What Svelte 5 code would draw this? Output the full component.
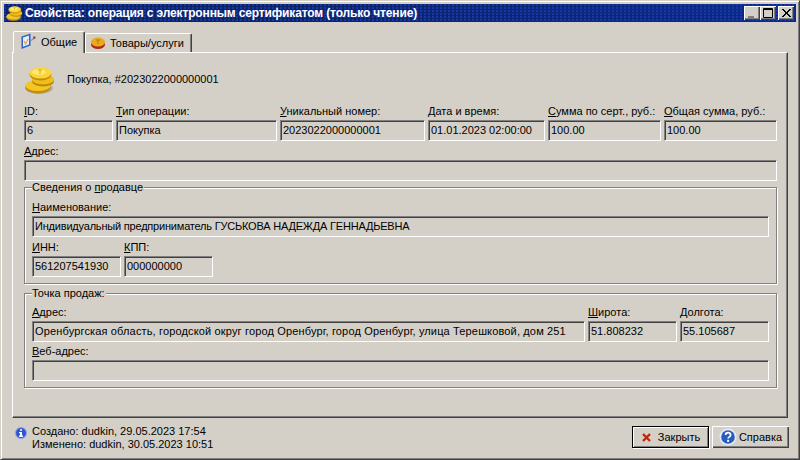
<script>
  const row1 = [
    { u: 'I', rest: 'D:', value: '6', w: 89 },
    { u: 'Т', rest: 'ип операции:', value: 'Покупка', w: 161 },
    { u: 'У', rest: 'никальный номер:', value: '2023022000000001', w: 145 },
    { u: 'Д', rest: 'ата и время:', value: '01.01.2023 02:00:00', w: 117 },
    { u: 'С', rest: 'умма по серт., руб.:', value: '100.00', w: 113 },
    { u: 'О', rest: 'бщая сумма, руб.:', value: '100.00', w: 113 }
  ];
</script>

{#snippet coins(w, h)}
  <svg class="ico" width={w} height={h} viewBox="0 0 30 27">
    <ellipse cx="14" cy="21" rx="14" ry="6" fill="#8f8a78" opacity="0.45" />
    <ellipse cx="13" cy="20.5" rx="12.5" ry="6" fill="#c08e0c" />
    <ellipse cx="13" cy="18.5" rx="12.5" ry="5.5" fill="#f3c525" />
    <ellipse cx="18" cy="14.5" rx="11" ry="5" fill="#b98808" />
    <ellipse cx="18" cy="12.5" rx="11" ry="5" fill="#f0bd1c" />
    <ellipse cx="15.5" cy="7.5" rx="11" ry="6" fill="#c08e0c" />
    <ellipse cx="15.5" cy="6" rx="11" ry="5.5" fill="#fbd632" />
    <ellipse cx="14" cy="5" rx="7" ry="3" fill="#ffe679" />
    <path d="M13 3h4M15 3v4" stroke="#d9a514" stroke-width="1" fill="none" />
  </svg>
{/snippet}

<div class="win">
  <div class="title">
    {@render coins(17, 15)}
    <span class="title-text">Свойства: операция с электронным сертификатом (только чтение)</span>
    <div class="ctrls">
      <div class="cb"><svg width="16" height="14" viewBox="0 0 16 14"><rect x="4" y="10" width="6" height="2" fill="#808080" /></svg></div>
      <div class="cb"><svg width="16" height="14" viewBox="0 0 16 14"><path d="M3.5 2.5h9v9h-9z M3 3.5h10" fill="none" stroke="#000" /></svg></div>
      <div class="cb gap"><svg width="16" height="14" viewBox="0 0 16 14"><path d="M4 3l8 8M5 3l8 8M12 3l-8 8M13 3l-8 8" stroke="#000" stroke-width="1" /></svg></div>
    </div>
  </div>

  <div class="tabs">
    <div class="tab active">
      <svg class="ico" width="17" height="17" viewBox="0 0 17 17">
        <path d="M1.5 3.5l9-3v12l-9 3.5z" fill="#2f62c8" />
        <path d="M3 4.6l6-2v9l-6 2.2z" fill="#e6eefc" />
        <path d="M4 8l1.6 3 2.6-5" fill="none" stroke="#d8a63c" stroke-width="1.2" />
        <path d="M10 8l5-3" stroke="#6f8fd8" stroke-width="1.2" />
        <rect x="13" y="3.5" width="2.5" height="2" fill="#b23a30" />
      </svg>
      <span>Общие</span>
    </div>
    <div class="tab">
      <svg class="ico" width="16" height="14" viewBox="0 0 16 14">
        <ellipse cx="8" cy="8.5" rx="7" ry="4.5" fill="#b12a14" />
        <ellipse cx="8" cy="6" rx="7" ry="4.5" fill="#e8ab1c" />
        <path d="M6 4h4M8 4v4" stroke="#b07a10" />
      </svg>
      <span>Товары/услуги</span>
    </div>
  </div>

  <div class="panel">
    <div class="head">
      {@render coins(30, 27)}
      <span class="head-text">Покупка, #2023022000000001</span>
    </div>

    <div class="row r1">
      {#each row1 as f}
        <div class="field" style="width:{f.w}px">
          <div class="lbl"><u>{f.u}</u>{f.rest}</div>
          <div class="inp">{f.value}</div>
        </div>
      {/each}
    </div>

    <div class="field addr">
      <div class="lbl"><u>А</u>дрес:</div>
      <div class="inp"></div>
    </div>

    <div class="group g1">
      <div class="legend">Сведения о <u>п</u>родавце</div>
      <div class="field">
        <div class="lbl"><u>Н</u>аименование:</div>
        <div class="inp tight">Индивидуальный предприниматель ГУСЬКОВА НАДЕЖДА ГЕННАДЬЕВНА</div>
      </div>
      <div class="row r2">
        <div class="field w89">
          <div class="lbl"><u>И</u>НН:</div>
          <div class="inp">561207541930</div>
        </div>
        <div class="field w89">
          <div class="lbl"><u>К</u>ПП:</div>
          <div class="inp">000000000</div>
        </div>
      </div>
    </div>

    <div class="group g2">
      <div class="legend">Точка продаж:</div>
      <div class="row r3">
        <div class="field grow">
          <div class="lbl"><u>А</u>дрес:</div>
          <div class="inp wide">Оренбургская область, городской округ город Оренбург, город Оренбург, улица Терешковой, дом 251</div>
        </div>
        <div class="field w89">
          <div class="lbl"><u>Ш</u>ирота:</div>
          <div class="inp">51.808232</div>
        </div>
        <div class="field w89">
          <div class="lbl"><u>Д</u>олгота:</div>
          <div class="inp">55.105687</div>
        </div>
      </div>
      <div class="field web">
        <div class="lbl"><u>В</u>еб-адрес:</div>
        <div class="inp"></div>
      </div>
    </div>
  </div>

  <div class="foot">
    <svg class="ico info" width="12" height="12" viewBox="0 0 12 12">
      <circle cx="6" cy="6" r="5.5" fill="#2f55d4" stroke="#8fa6ea" stroke-width="1" />
      <rect x="5" y="2.2" width="2" height="1.6" fill="#fff" />
      <path d="M4 5h3v3.5h1V10H4V8.5h1V6.2H4z" fill="#fff" />
    </svg>
    <div class="stamps">
      <div>Создано: dudkin, 29.05.2023 17:54</div>
      <div>Изменено: dudkin, 30.05.2023 10:51</div>
    </div>
    <div class="btns">
      <div class="btn def">
        <svg class="ico" width="11" height="11" viewBox="0 0 11 11"><path d="M2 2l7 7M9 2l-7 7" stroke="#b52a12" stroke-width="2.4" /></svg>
        <span>Закрыть</span>
      </div>
      <div class="btn">
        <svg class="ico" width="18" height="18" viewBox="0 0 18 18">
          <circle cx="9" cy="9" r="8.5" fill="#e4eaf6" />
          <circle cx="9" cy="9" r="6.8" fill="#2a5cc0" />
          <path d="M6.6 7c0-3.2 5-3.2 5 0 0 2-2.5 1.8-2.5 3.6" fill="none" stroke="#fff" stroke-width="1.7" />
          <rect x="8.1" y="11.8" width="2" height="2" fill="#fff" />
        </svg>
        <span>Справка</span>
      </div>
    </div>
  </div>
</div>

<style>
  :global(body) { margin: 0; background: #d4d0c8; }
  .win {
    box-sizing: border-box;
    width: 800px;
    height: 460px;
    padding: 3px 3px 2px 3px;
    background: #d4d0c8;
    border: 1px solid;
    border-color: #d4d0c8 #404040 #404040 #d4d0c8;
    box-shadow: inset 1px 1px #fff, inset -1px -1px #808080;
    font: 11px "Liberation Sans", Arial, sans-serif;
    color: #000;
    display: flex;
    flex-direction: column;
    overflow: hidden;
  }
  .ico { display: block; flex: none; }
  u { text-decoration: underline; text-underline-offset: 1px; }

  .title {
    flex: none;
    height: 18px;
    display: flex;
    align-items: center;
    gap: 2px;
    padding: 0 2px 0 2px;
    background-color: #0a246a;
    background-image:
      radial-gradient(circle at 1px 1px, #1a37a8 0.7px, transparent 0.8px),
      linear-gradient(90deg, #0a246a 35%, #0a2a8a 100%);
    background-size: 4px 3px, 100% 100%;
  }
  .title-text {
    color: #fff;
    font-weight: bold;
    font-size: 12px;
    letter-spacing: -0.15px;
    white-space: nowrap;
  }
  .ctrls { margin-left: auto; display: flex; }
  .cb {
    box-sizing: border-box;
    width: 16px;
    height: 14px;
    background: #d4d0c8;
    box-shadow: inset 1px 1px #fff, inset -1px -1px #404040, inset -2px -2px #808080;
  }
  .cb svg { display: block; }
  .gap { margin-left: 2px; }

  .tabs {
    flex: none;
    display: flex;
    align-items: flex-end;
    height: 21px;
    margin: 9px 0 0 8px;
    padding-left: 1px;
    position: relative;
    z-index: 1;
  }
  .tab {
    box-sizing: border-box;
    height: 19px;
    display: flex;
    align-items: center;
    gap: 4px;
    padding: 0 4px 1px 4px;
    border: 1px solid;
    border-bottom: 0;
    border-color: #fff #404040 transparent #fff;
    border-radius: 2px 2px 0 0;
    box-shadow: inset -1px 0 #808080;
    width: 107px;
  }
  .tab.active {
    width: 72px;
    height: 22px;
    margin-bottom: -1px;
    background: #d4d0c8;
    padding: 0 6px 2px 6px;
    gap: 4px;
  }

  .panel {
    flex: none;
    box-sizing: border-box;
    height: 366px;
    margin: 0 8px;
    padding: 14px 10px 0 11px;
    border: 1px solid;
    border-color: #fff #404040 #404040 #fff;
    box-shadow: inset -1px -1px #808080;
  }
  .head {
    height: 27px;
    display: flex;
    align-items: center;
    gap: 12px;
    padding-left: 1px;
  }
  .head-text { padding-bottom: 3px; }
  .row { display: flex; gap: 3px; }
  .r1 { margin-top: 11px; }
  .field { display: flex; flex-direction: column; min-width: 0; }
  .lbl { height: 15px; line-height: 13px; white-space: nowrap; }
  .inp {
    box-sizing: border-box;
    height: 21px;
    padding: 0 2px;
    line-height: 19px;
    white-space: nowrap;
    overflow: hidden;
    border: 1px solid;
    border-color: #808080 #fff #fff #808080;
    box-shadow: inset 1px 1px #404040, inset -1px -1px #d4d0c8;
  }
  .tight { letter-spacing: -0.2px; }
  .wide { letter-spacing: 0.15px; }
  .addr { margin-top: 4px; }

  .group {
    box-sizing: border-box;
    padding: 0 7px;
    border: 1px solid #808080;
    box-shadow: 1px 1px #fff, inset 1px 1px #fff;
    width: 753px;
  }
  .g1 { margin-top: 6px; height: 97px; }
  .g2 { margin-top: 9px; height: 95px; }
  .legend {
    width: max-content;
    height: 13px;
    line-height: 13px;
    margin-top: -7px;
    margin-bottom: 7px;
    background: #d4d0c8;
    padding-right: 1px;
  }
  .g2 .legend { margin-bottom: 6px; }
  .r2 { margin-top: 4px; }
  .grow { flex: 1; }
  .w89 { width: 89px; flex: none; }
  .web { margin-top: 3px; }

  .foot {
    flex: 1;
    display: flex;
    align-items: flex-start;
    padding: 8px 7px 0 11px;
  }
  .info { margin-top: 1px; }
  .stamps { margin: -1px 0 0 5px; line-height: 13px; }
  .btns { margin-left: auto; display: flex; gap: 3px; }
  .btn {
    box-sizing: border-box;
    width: 77px;
    height: 22px;
    display: flex;
    align-items: center;
    justify-content: center;
    gap: 2px;
    box-shadow: inset 1px 1px #fff, inset -1px -1px #404040, inset -2px -2px #808080;
  }
  .btn.def {
    border: 1px solid #000;
    box-shadow: inset 1px 1px #fff, inset -1px -1px #808080, 1px 1px #fff;
    gap: 6px;
  }
</style>
